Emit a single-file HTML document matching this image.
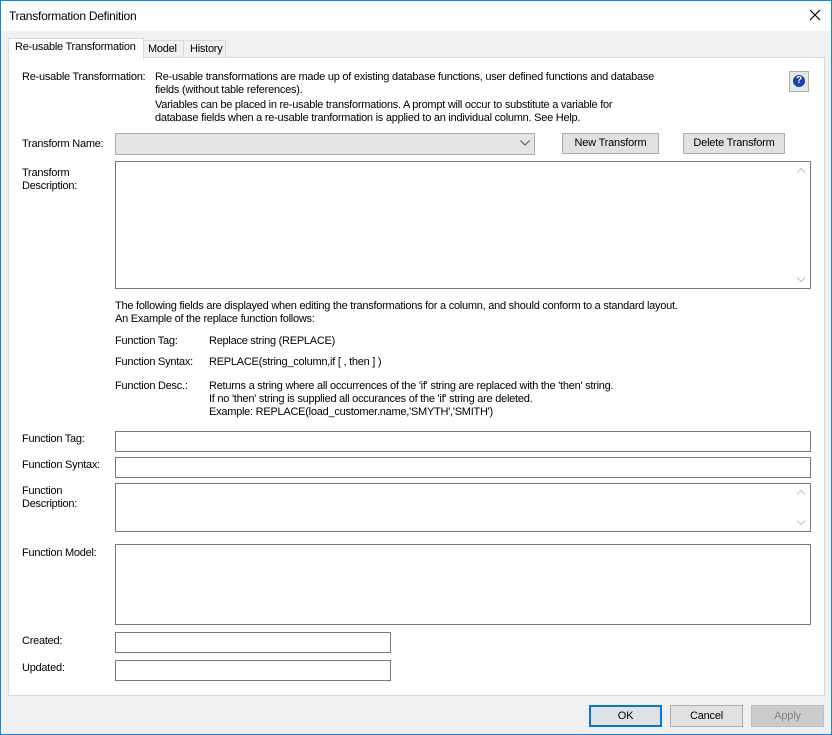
<!DOCTYPE html>
<html><head><style>
*{margin:0;padding:0;box-sizing:border-box}
body{width:832px;height:735px;background:#f0f0f0;font-family:"Liberation Sans",sans-serif;font-size:11px;color:#000;position:relative;overflow:hidden}
.a{position:absolute;white-space:nowrap;line-height:13px;letter-spacing:-0.25px}
.box{position:absolute;background:#fff;border:1px solid #7a7a7a}
.btn{position:absolute;background:#e1e1e1;border:1px solid #adadad;text-align:center;line-height:19px;font-size:11px;letter-spacing:-0.2px}
.sb{position:absolute;right:1px;top:1px;bottom:1px;width:16px;background:#fff}
.sb::before{content:"";position:absolute;left:5px;top:6px;width:5px;height:5px;border-left:1px solid #c0c0c0;border-top:1px solid #c0c0c0;transform:rotate(45deg)}
.sb::after{content:"";position:absolute;left:5px;bottom:6px;width:5px;height:5px;border-right:1px solid #c0c0c0;border-bottom:1px solid #c0c0c0;transform:rotate(45deg)}
</style></head><body>
<div style="position:absolute;left:0;top:0;width:832px;height:31px;background:#fff"></div>
<div class="a" style="left:9px;top:9px;font-size:12px;line-height:15px">Transformation Definition</div>
<svg style="position:absolute;left:809px;top:9px" width="12" height="12"><path d="M1 1L11 11M11 1L1 11" stroke="#000" stroke-width="1.2"/></svg>
<div style="position:absolute;left:8px;top:57px;width:817px;height:639px;background:#fff;border:1px solid #d9d9d9"></div>
<div style="position:absolute;left:143px;top:40px;width:41px;height:18px;background:#f0f0f0;border:1px solid #d9d9d9"></div>
<div style="position:absolute;left:183px;top:40px;width:43px;height:18px;background:#f0f0f0;border:1px solid #d9d9d9"></div>
<div style="position:absolute;left:8px;top:38px;width:136px;height:21px;background:#fff;border:1px solid #d9d9d9;border-bottom:none"></div>
<div class="a" style="left:15px;top:41px">Re-usable Transformation</div>
<div class="a" style="left:148px;top:43px">Model</div>
<div class="a" style="left:190px;top:43px">History</div>
<div class="a" style="left:22px;top:71px">Re-usable Transformation:</div>
<div class="a" style="left:155px;top:71px">Re-usable transformations are made up of existing database functions, user defined functions and database<br>fields (without table references).</div>
<div class="a" style="left:155px;top:99px">Variables can be placed in re-usable transformations. A prompt will occur to substitute a variable for<br>database fields when a re-usable tranformation is applied to an individual column. See Help.</div>
<div style="position:absolute;left:789px;top:71px;width:20px;height:21px;background:#e8e8e0;border:1px solid #adadad"></div>
<div style="position:absolute;left:793px;top:75px;width:12px;height:12px;border-radius:50%;background:#1a3fb0;color:#fff;font-weight:bold;font-size:10px;line-height:12px;text-align:center">?</div>
<div class="a" style="left:22px;top:138px">Transform Name:</div>
<div style="position:absolute;left:115px;top:133px;width:420px;height:22px;background:#e5e5e5;border:1px solid #adadad"></div>
<svg style="position:absolute;left:520px;top:140px" width="10" height="6"><path d="M0.5 0.5L5 5L9.5 0.5" stroke="#555" fill="none"/></svg>
<div class="btn" style="left:562px;top:133px;width:97px;height:21px">New Transform</div>
<div class="btn" style="left:683px;top:133px;width:102px;height:21px">Delete Transform</div>
<div class="a" style="left:22px;top:167px">Transform<br>Description:</div>
<div class="box" style="left:115px;top:161px;width:696px;height:128px"><div class="sb"></div></div>
<div class="a" style="left:115px;top:300px">The following fields are displayed when editing the transformations for a column, and should conform to a standard layout.<br>An Example of the replace function follows:</div>
<div class="a" style="left:115px;top:335px">Function Tag:</div>
<div class="a" style="left:209px;top:335px">Replace string (REPLACE)</div>
<div class="a" style="left:115px;top:356px">Function Syntax:</div>
<div class="a" style="left:209px;top:356px">REPLACE(string_column,if [ , then ] )</div>
<div class="a" style="left:115px;top:380px">Function Desc.:</div>
<div class="a" style="left:209px;top:380px">Returns a string where all occurrences of the 'if' string are replaced with the 'then' string.<br>If no 'then' string is supplied all occurances of the 'if' string are deleted.<br>Example: REPLACE(load_customer.name,'SMYTH','SMITH')</div>
<div class="a" style="left:22px;top:433px">Function Tag:</div>
<div class="box" style="left:115px;top:431px;width:696px;height:21px"></div>
<div class="a" style="left:22px;top:459px">Function Syntax:</div>
<div class="box" style="left:115px;top:457px;width:696px;height:21px"></div>
<div class="a" style="left:22px;top:485px">Function<br>Description:</div>
<div class="box" style="left:115px;top:483px;width:696px;height:49px"><div class="sb"></div></div>
<div class="a" style="left:22px;top:547px">Function Model:</div>
<div class="box" style="left:115px;top:544px;width:696px;height:81px"></div>
<div class="a" style="left:22px;top:635px">Created:</div>
<div class="box" style="left:115px;top:632px;width:276px;height:21px"></div>
<div class="a" style="left:22px;top:662px">Updated:</div>
<div class="box" style="left:115px;top:660px;width:276px;height:21px"></div>
<div class="btn" style="left:589px;top:705px;width:73px;height:22px;border:2px solid #0078d7;line-height:18px">OK</div>
<div class="btn" style="left:670px;top:705px;width:73px;height:22px;line-height:20px">Cancel</div>
<div class="btn" style="left:751px;top:705px;width:73px;height:22px;line-height:20px;background:#ccc;border-color:#bfbfbf;color:#838383">Apply</div>
<div style="position:absolute;left:0;top:0;width:832px;height:735px;border:1px solid #1883d7;pointer-events:none"></div>
</body></html>
